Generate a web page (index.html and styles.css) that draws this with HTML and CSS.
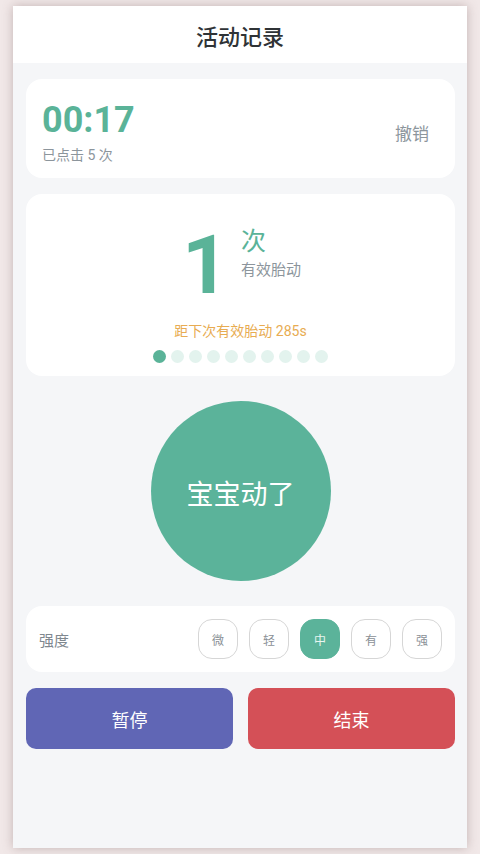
FILE: index.html
```html
<!DOCTYPE html>
<html lang="zh-CN">
<head>
<meta charset="utf-8">
<title>活动记录</title>
<link rel="stylesheet" href="styles.css">
</head>
<body>
<div class="phone">
  <header class="topbar"><h1 class="title">活动记录</h1></header>
  <main class="content">
    <section class="card timer-card">
      <div class="timer-info">
        <div class="timer">00:17</div>
        <div class="taps">已点击 5 次</div>
      </div>
      <div class="undo">撤销</div>
    </section>

    <section class="card count-card">
      <div class="count-row">
        <div class="count-num">1</div>
        <div class="count-side">
          <div class="count-unit">次</div>
          <div class="count-label">有效胎动</div>
        </div>
      </div>
      <div class="hint">距下次有效胎动 285s</div>
      <div class="dots">
        <span class="dot on"></span><span class="dot"></span><span class="dot"></span><span class="dot"></span><span class="dot"></span><span class="dot"></span><span class="dot"></span><span class="dot"></span><span class="dot"></span><span class="dot"></span>
      </div>
    </section>

    <div class="kick-wrap"><button class="kick">宝宝动了</button></div>

    <section class="card level-card">
      <div class="level-label">强度</div>
      <div class="levels">
        <span class="lv">微</span><span class="lv">轻</span><span class="lv active">中</span><span class="lv">有</span><span class="lv">强</span>
      </div>
    </section>

    <div class="actions">
      <button class="act pause">暂停</button>
      <button class="act stop">结束</button>
    </div>
  </main>
</div>
</body>
</html>
```
FILE: styles.css
```css
* { box-sizing: border-box; }
html, body { margin: 0; padding: 0; }
body {
  background: #f1e8e8;
  font-family: Roboto, "Noto Sans CJK SC", sans-serif;
  width: 480px;
  height: 854px;
  padding: 6px 13px;
  overflow: hidden;
}
.phone {
  width: 454px;
  height: 842px;
  background: #f5f6f8;
  box-shadow: 0 0 10px rgba(110, 80, 80, 0.35);
  display: flex;
  flex-direction: column;
}
.topbar {
  height: 57px;
  background: #fff;
  display: flex;
  align-items: center;
  justify-content: center;
}
.title {
  margin: 0;
  font-family: "Noto Sans CJK SC", sans-serif;
  font-size: 22px;
  font-weight: 500;
  color: #2f3336;
  line-height: 1;
}
.content {
  padding: 16px 12px 0 13px;
  display: flex;
  flex-direction: column;
}
.card {
  background: #fff;
  border-radius: 16px;
}
.timer-card {
  display: flex;
  align-items: center;
  justify-content: space-between;
  padding: 21px 26px 13px 16px;
}
.timer {
  font-size: 36px;
  line-height: 40px;
  font-weight: 700;
  color: #5ab398;
}
.taps {
  margin-top: 5px;
  font-size: 14px;
  line-height: 20px;
  color: #8c959c;
}
.undo {
  font-size: 17px;
  color: #8d969d;
}
.count-card {
  margin-top: 16px;
  padding: 30px 0 13px;
  display: flex;
  flex-direction: column;
  align-items: center;
}
.count-row {
  display: flex;
  align-items: flex-start;
  gap: 12px;
  padding-left: 2px;
}
.count-num {
  font-size: 82px;
  line-height: 82px;
  font-weight: 700;
  color: #5ab398;
}
.count-side {
  padding-top: 4px;
}
.count-unit {
  font-size: 25px;
  line-height: 28px;
  color: #5ab398;
}
.count-label {
  margin-top: 4px;
  font-size: 15px;
  line-height: 20px;
  color: #8c959c;
}
.hint {
  margin-top: 15px;
  font-size: 14px;
  line-height: 20px;
  color: #e8ac52;
}
.dots {
  margin-top: 9px;
  display: flex;
  gap: 5px;
}
.dot {
  width: 13px;
  height: 13px;
  border-radius: 50%;
  background: #e3f3ee;
}
.dot.on { background: #5ab398; }
.kick-wrap {
  margin-top: 25px;
  display: flex;
  justify-content: center;
}
.kick {
  width: 180px;
  height: 180px;
  border-radius: 50%;
  border: none;
  background: #5bb39a;
  color: #fff;
  font-family: "Noto Sans CJK SC", sans-serif;
  font-size: 27px;
  padding: 0;
  padding-top: 2px;
}
.level-card {
  margin-top: 25px;
  height: 66px;
  display: flex;
  align-items: center;
  justify-content: space-between;
  padding: 0 13px;
}
.level-label {
  font-size: 15px;
  color: #7f888f;
}
.levels {
  display: flex;
  gap: 11px;
}
.lv {
  width: 40px;
  height: 40px;
  border-radius: 14px;
  border: 1.5px solid #d6d6d6;
  display: flex;
  align-items: center;
  justify-content: center;
  font-size: 12px;
  color: #8a9096;
}
.lv.active {
  background: #5bb39a;
  border-color: #5bb39a;
  color: #e8f5f0;
}
.actions {
  margin-top: 16px;
  display: flex;
  gap: 15px;
}
.act {
  flex: 1;
  height: 61px;
  border: none;
  border-radius: 10px;
  color: #fff;
  font-family: "Noto Sans CJK SC", sans-serif;
  font-size: 18px;
  padding: 0;
}
.pause { background: #6066b5; }
.stop { background: #d45057; }
```
